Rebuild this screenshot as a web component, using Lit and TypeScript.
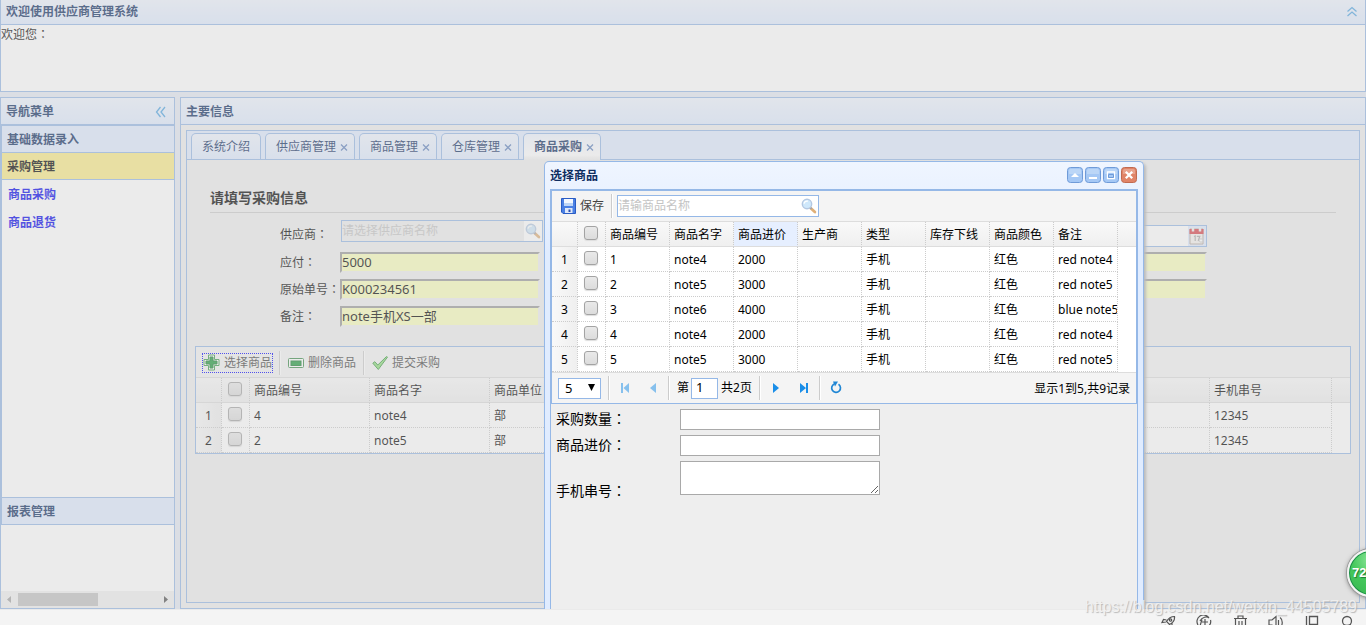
import { LitElement, html, css, svg, nothing } from "lit";
import { customElement } from "lit/decorators.js";
import { classMap } from "lit/directives/class-map.js";

const shared = css`
  * { box-sizing: border-box; }
  button, input, select, textarea {
    font: inherit;
    color: inherit;
    margin: 0;
    padding: 0;
    border: 0;
    background: none;
    border-radius: 0;
    outline: none;
    appearance: none;
  }
  svg { display: block; flex: none; }
  .colon { font-family: "Noto Sans CJK TC", sans-serif; }
  .toolbar {
    display: flex;
    align-items: center;
    height: 31px;
    background: #f4f4f4;
    border-bottom: 1px solid #ddd;
  }
  .sep {
    flex: none;
    width: 2px;
    height: 24px;
    border-left: 1px solid #ccc;
    border-right: 1px solid #fff;
  }
  .tool {
    display: flex;
    align-items: center;
    gap: 4px;
    height: 18px;
    color: #444;
    white-space: nowrap;
  }
  .search {
    display: flex;
    align-items: center;
    width: 202px;
    height: 22px;
    border: 1px solid #95b8e7;
    background: #fff;
  }
  .search input {
    flex: 1;
    min-width: 0;
    height: 20px;
    padding-bottom: 2px;
    font-size: 12px;
  }
  .search input::placeholder { color: #c4c4c4; opacity: 1; }
`;

const colon = html`<span class="colon">：</span>`;

const magnifier = svg`<svg width="18" height="20" viewBox="0 0 18 20" aria-hidden="true">
  <path d="M10.500 12l4.400 4" stroke="#e0b078" stroke-width="2.800" stroke-linecap="round"/>
  <path d="M10 11.400l1.600 1.500" stroke="#9aa4b2" stroke-width="1.600"/>
  <circle cx="7" cy="8" r="4.700" fill="#cfe8fb" stroke="#b4c8e2" stroke-width="1.400"/>
  <path d="M4 7.600c.5-2 2.400-2.800 4-2.400" stroke="#fff" stroke-width="1.300" fill="none"/>
</svg>`;

interface Column { title: string; key: string; width: number; }
type Row = Record<string, string>;

@customElement("data-grid")
class DataGrid extends LitElement {
  static properties = {
    columns: { attribute: false },
    rows: { attribute: false },
    hot: { type: String },
  };
  declare columns: Column[];
  declare rows: Row[];
  declare hot: string;

  static styles = [shared, css`
    :host { display: block; background: #fff; overflow: hidden; }
    table { border-collapse: separate; border-spacing: 0; table-layout: fixed; width: 100%; }
    .num { width: 26px; }
    .tick { width: 28px; }
    th, td {
      height: 25px;
      padding: 2px 4px 0;
      text-align: left;
      font-weight: 400;
      line-height: 16px;
      white-space: nowrap;
      overflow: hidden;
      border-right: 1px dotted #ccc;
      border-bottom: 1px dotted #ccc;
    }
    th { border-bottom: 1px solid #ddd; }
    thead tr { background: linear-gradient(to bottom, #f9f9f9, #efefef); }
    .hot { background: #e6efff; }
    .index { text-align: center; padding: 2px 0 0; background: linear-gradient(to right, #f9f9f9, #efefef); }
    thead .index { background: none; }
    .rest { border-right: 0; }
    td.rest { border-bottom: 0; }
    .box { padding: 0 6px 2px; }
    input {
      display: block;
      width: 14px;
      height: 14px;
      border: 1px solid #a3a3a3;
      border-radius: 3px;
      background: linear-gradient(to bottom, #e9e9e9, #dcdcdc);
      box-shadow: 0 1px 1px #ddd;
    }
  `];

  render() {
    return html`<table>
      <colgroup>
        <col class="num"><col class="tick">
        ${this.columns.map((c) => html`<col style="width:${c.width}px">`)}
        <col>
      </colgroup>
      <thead><tr>
        <th class="index"></th>
        <th class="box"><input type="checkbox" aria-label="全选"></th>
        ${this.columns.map((c) => html`<th class=${classMap({ hot: !!c.title && c.title === this.hot })}>${c.title}</th>`)}
        <th class="rest"></th>
      </tr></thead>
      <tbody>${this.rows.map((r, i) => html`<tr>
        <td class="index">${i + 1}</td>
        <td class="box"><input type="checkbox" aria-label="选择"></td>
        ${this.columns.map((c) => html`<td>${r[c.key] ?? ""}</td>`)}
        <td class="rest"></td>
      </tr>`)}</tbody>
    </table>`;
  }
}

@customElement("product-dialog")
class ProductDialog extends LitElement {
  private columns: Column[] = [
    { title: "商品编号", key: "id", width: 64 },
    { title: "商品名字", key: "name", width: 64 },
    { title: "商品进价", key: "price", width: 64 },
    { title: "生产商", key: "maker", width: 64 },
    { title: "类型", key: "type", width: 64 },
    { title: "库存下线", key: "stock", width: 64 },
    { title: "商品颜色", key: "color", width: 64 },
    { title: "备注", key: "note", width: 64 },
  ];
  private rows: Row[] = [
    { id: "1", name: "note4", price: "2000", type: "手机", color: "红色", note: "red note4" },
    { id: "2", name: "note5", price: "3000", type: "手机", color: "红色", note: "red note5" },
    { id: "3", name: "note6", price: "4000", type: "手机", color: "红色", note: "blue note5" },
    { id: "4", name: "note4", price: "2000", type: "手机", color: "红色", note: "red note4" },
    { id: "5", name: "note5", price: "3000", type: "手机", color: "红色", note: "red note5" },
  ];

  static styles = [shared, css`
    :host {
      display: flex;
      flex-direction: column;
      padding: 0 5px;
      color: #000;
      border: 1px solid #95b8e7;
      border-bottom: 0;
      border-radius: 5px 5px 0 0;
      background: linear-gradient(to bottom, #eff5ff, #e0ecff 20%);
      box-shadow: 2px 2px 3px #bbb;
    }
    .title {
      display: flex;
      align-items: center;
      justify-content: space-between;
      height: 27px;
      font-weight: 700;
      color: #0e2d5f;
    }
    .tools { display: flex; gap: 2px; padding: 0 1px 1px 0; }
    .tools button { width: 16px; height: 16px; }
    .body { flex: 1; border: 1px solid #95b8e7; border-bottom: 0; background: #eee; }
    .panel { border: 1px solid #95b8e7; }
    .toolbar { padding: 0 9px; }
    .toolbar .sep { margin: 0 4px 0 7px; }
    .pager {
      display: flex;
      align-items: center;
      height: 31px;
      padding: 0 6px;
      border-top: 1px solid #ddd;
      background: #f4f4f4;
    }
    .size { position: relative; width: 43px; height: 21px; }
    .size select {
      width: 100%;
      height: 21px;
      padding: 0 6px 2px;
      font-size: 13px;
      line-height: 18px;
      border: 1px solid #95b8e7;
      background: #fff;
    }
    .size svg { position: absolute; right: 6px; top: 6px; pointer-events: none; }
    .pager .sep { margin: 0 7px; }
    .pager button { width: 16px; height: 16px; }
    .pager button + button { margin-left: 12px; }
    .off { opacity: 0.5; }
    .page { display: flex; align-items: center; gap: 2px; padding-right: 3px; }
    .page input {
      width: 27px;
      height: 21px;
      padding: 0 4px 2px;
      font-size: 13px;
      border: 1px solid #95b8e7;
      background: #fff;
    }
    .info { margin-left: auto; padding-top: 2px; white-space: nowrap; }
    .fields {
      display: grid;
      grid-template-columns: 124px 200px;
      grid-template-rows: 21px 21px 39px;
      row-gap: 5px;
      padding: 5px;
      font-size: 14px;
      line-height: 18px;
    }
    .fields input { height: 21px; border: 1px solid #a9a9a9; background: #fff; }
    .fields textarea { width: 200px; height: 34px; border: 1px solid #a9a9a9; background: #fff; resize: both; }
    .low { align-self: end; }
  `];

  render() {
    const frame = (fill: string, line: string) => svg`
      <rect x=".5" y=".5" width="15" height="15" rx="3" fill=${fill} stroke=${line}/>
      <path d="M2 7V3.500Q2 2 3.500 2h9Q14 2 14 3.500V7z" fill="#fff" opacity=".25"/>`;
    return html`
      <div class="title"><span>选择商品</span>
        <div class="tools">
          <button aria-label="折叠"><svg width="16" height="16">${frame("#a5c8f5", "#6f9bd8")}<path d="M4 10h8L8 6z" fill="#fff"/></svg></button>
          <button aria-label="最小化"><svg width="16" height="16">${frame("#a5c8f5", "#6f9bd8")}<path d="M4 10h8v2H4z" fill="#fff"/></svg></button>
          <button aria-label="最大化"><svg width="16" height="16">${frame("#a5c8f5", "#6f9bd8")}<path d="M4.500 5h7v6.500h-7z" fill="#a5c8f5" stroke="#fff" stroke-width="1.300"/><path d="M5.500 7.500h5v3h-5z" fill="#a5c8f5" stroke="#6f9bd8"/></svg></button>
          <button aria-label="关闭"><svg width="16" height="16">${frame("#e08468", "#c06a50")}<path d="M4.800 4.800l6.400 6.400M11.200 4.800l-6.400 6.400" stroke="#fff" stroke-width="2.300"/></svg></button>
        </div>
      </div>
      <div class="body">
        <div class="panel">
          <div class="toolbar">
            <button class="tool">
              <svg width="15" height="16" viewBox="0 0 15 16"><path d="M.5.500h14v15H2L.5 14z" fill="#4a80e4" stroke="#2a5cc4"/><path d="M3 1h9v7H3z" fill="#f3f8ff"/><path d="M3 5h9v3H3z" fill="#bdd5f6"/><path d="M4 10h7.500v5H4z" fill="#dfe8f8"/><path d="M7.500 11.500h2V14h-2z" fill="#2b4fb0"/></svg>
              保存</button>
            <span class="sep"></span>
            <div class="search"><input placeholder="请输商品名称" aria-label="商品名称">${magnifier}</div>
          </div>
          <data-grid .columns=${this.columns} .rows=${this.rows} .hot=${"商品进价"}></data-grid>
          <div class="pager">
            <div class="size">
              <select aria-label="每页条数"><option>5</option><option>10</option></select>
              <svg width="7" height="7"><path d="M0 0h7L3.500 7z" fill="#000"/></svg>
            </div>
            <span class="sep"></span>
            <button class="off" aria-label="首页"><svg width="16" height="16"><path d="M4 3h2v10H4zM12 3v10L6.500 8z" fill="#1a8ee8"/></svg></button>
            <button class="off" aria-label="上一页"><svg width="16" height="16"><path d="M11 3v10L5 8z" fill="#1a8ee8"/></svg></button>
            <span class="sep"></span>
            <label class="page">第<input value="1"></label>
            <span>共2页</span>
            <span class="sep"></span>
            <button aria-label="下一页"><svg width="16" height="16"><path d="M5 3v10l6-5z" fill="#1a8ee8"/></svg></button>
            <button aria-label="末页"><svg width="16" height="16"><path d="M10 3h2v10h-2zM4 3v10l6-5z" fill="#1a8ee8"/></svg></button>
            <span class="sep"></span>
            <button aria-label="刷新"><svg width="16" height="16"><path d="M10.500 4.300A4.400 4.400 0 1 1 6.200 4" fill="none" stroke="#1f86d4" stroke-width="1.700"/><path d="M5 1.500h5L7 6.500z" fill="#1f86d4"/></svg></button>
            <span class="info">显示1到5,共9记录</span>
          </div>
        </div>
        <div class="fields">
          <label for="qty">采购数量${colon}</label><input id="qty">
          <label for="cost">商品进价${colon}</label><input id="cost">
          <label class="low" for="serial">手机串号${colon}</label><textarea id="serial"></textarea>
        </div>
      </div>`;
  }
}

@customElement("app-root")
class AppRoot extends LitElement {
  private tabs = ["系统介绍", "供应商管理", "商品管理", "仓库管理", "商品采购"];
  private columns: Column[] = [
    { title: "商品编号", key: "id", width: 120 },
    { title: "商品名字", key: "name", width: 120 },
    { title: "商品单位", key: "unit", width: 120 },
    { title: "", key: "a", width: 120 },
    { title: "", key: "b", width: 120 },
    { title: "", key: "c", width: 120 },
    { title: "", key: "d", width: 120 },
    { title: "", key: "e", width: 120 },
    { title: "手机串号", key: "serial", width: 122 },
  ];
  private rows: Row[] = [
    { id: "4", name: "note4", unit: "部", serial: "12345" },
    { id: "2", name: "note5", unit: "部", serial: "12345" },
  ];

  static styles = [shared, css`
    :host {
      display: flex;
      flex-direction: column;
      position: relative;
      height: 100vh;
      overflow: hidden;
      font-family: "Noto Sans", "Noto Sans CJK SC", sans-serif;
      font-size: 12px;
      line-height: 16px;
      color: #000;
      background: #f4f4f4;
    }
    .app {
      position: relative;
      flex: 1;
      min-height: 0;
      display: flex;
      flex-direction: column;
      gap: 5px;
      background: #e5eaf3;
      overflow: hidden;
    }
    .head {
      display: flex;
      align-items: center;
      justify-content: space-between;
      flex: none;
      height: 27px;
      padding: 2px 5px 0;
      font-weight: 700;
      color: #0e2d5f;
      background: linear-gradient(to bottom, #eff5ff, #e0ecff);
      border-bottom: 1px solid #95b8e7;
    }
    .north { height: 92px; border: 1px solid #95b8e7; border-top: 0; background: #fff; }
    .north .head { height: 25px; padding: 0 7px 0 5px; }
    .hello { display: block; padding-top: 1px; }
    .middle { flex: 1; min-height: 0; display: flex; gap: 5px; }
    .west {
      flex: none;
      width: 175px;
      display: flex;
      flex-direction: column;
      border: 1px solid #95b8e7;
      background: #fff;
    }
    .west .head { padding-right: 8px; }
    .accordion {
      flex: 1;
      min-height: 0;
      display: flex;
      flex-direction: column;
      border: 1px solid #95b8e7;
      border-width: 1px 0 0 1px;
    }
    .fold {
      flex: none;
      height: 27px;
      padding: 2px 5px 0;
      text-align: left;
      font-weight: 700;
      color: #0e2d5f;
      background: #e0ecff;
      border-bottom: 1px solid #95b8e7;
    }
    .fold.open { color: #000; background: #fbec88; }
    .links { flex: 1; display: flex; flex-direction: column; gap: 12px; padding: 7px 6px; font-weight: 700; }
    .links a { color: #0000ee; text-decoration: none; }
    .last { border-top: 1px solid #95b8e7; height: 28px; }
    .blank { flex: none; height: 66px; }
    .scroll { flex: none; display: flex; align-items: center; height: 17px; background: #f1f1f1; }
    .scroll .thumb { width: 80px; height: 13px; background: #c1c1c1; }
    .scroll svg:last-child { margin-left: auto; }
    .center {
      flex: 1;
      min-width: 0;
      display: flex;
      flex-direction: column;
      border: 1px solid #95b8e7;
      background: #eee;
    }
    .tabs {
      flex: 1;
      display: flex;
      flex-direction: column;
      margin: 5px;
      border: 1px solid #95b8e7;
    }
    .strip {
      flex: none;
      display: flex;
      align-items: flex-end;
      gap: 4px;
      height: 29px;
      padding: 0 4px;
      background: #e0ecff;
      border-bottom: 1px solid #95b8e7;
    }
    .tab {
      display: flex;
      align-items: center;
      gap: 4px;
      height: 26px;
      padding: 0 10px;
      color: #0e2d5f;
      background: linear-gradient(to bottom, #eff5ff, #e0ecff);
      border: 1px solid #95b8e7;
      border-bottom: 0;
      border-radius: 5px 5px 0 0;
    }
    .tab.closable { padding-right: 6px; }
    .tab.on { height: 27px; margin-bottom: -1px; font-weight: 700; background: linear-gradient(to bottom, #eff5ff, #fff 80%, #eee); }
    .sheet { flex: 1; padding: 28px 8px 0; }
    .sheet h2 {
      margin: 0 15px 7px;
      padding-bottom: 4px;
      font-size: 14px;
      font-weight: 700;
      line-height: 20px;
      border-bottom: 1px solid #ccc;
    }
    form { display: flex; justify-content: space-between; margin: 0 144px 16px 85px; }
    .fields { display: grid; grid-template-columns: 60px 202px; grid-template-rows: 29px 27px 27px 27px; align-items: center; }
    .fields.right { grid-template-columns: 202px; }
    .fields label { white-space: nowrap; }
    .fields .search { align-self: start; margin-left: 1px; background: #eee; }
    .fields .date { align-self: end; margin: 0 0 2px; background: #fff; }
    .right .fill { justify-self: end; }
    .search .btn { background: #fff; }
    .fill {
      height: 21px;
      width: 200px;
      padding-bottom: 2px;
      font-size: 13px;
      background: #faffbd;
      border: 2px solid;
      border-color: #9a9a9a #eee #eee #9a9a9a;
    }
    .list { border: 1px solid #95b8e7; }
    .list .toolbar { padding: 1px 7px 0; }
    .list .sep { margin: 0 7px; }
    .focus { outline: 1px dotted #0000ff; }
    .mask { position: absolute; inset: 0; background: #ccc; opacity: 0.4; }
    product-dialog { position: absolute; left: 544px; top: 161px; bottom: 0; width: 600px; }
    .bar {
      flex: none;
      display: flex;
      justify-content: flex-end;
      gap: 20px;
      height: 16px;
      padding: 5px 10px 0 0;
      border-top: 1px solid #eaeaea;
      background: #f4f4f4;
      overflow: hidden;
    }
    .bar button { width: 16px; height: 16px; }
    .mark {
      position: absolute;
      right: 9px;
      bottom: 8px;
      font: 16px/20px "Liberation Sans", sans-serif;
      color: #f2f2f2;
      text-shadow: 1px 1px 1px #aaa;
      opacity: 0.8;
    }
    .ball {
      position: absolute;
      right: -29px;
      bottom: 28px;
      width: 48px;
      height: 48px;
      padding-left: 3px;
      text-align: left;
      border: 2px solid #f4f4f4;
      border-radius: 50%;
      font: 700 13px/20px "Liberation Sans", sans-serif;
      color: #fff;
      text-shadow: 1px 1px 1px #1b7c34;
      background: radial-gradient(circle at 50% 20%, #8ee69a, #45c85c 45%, #38b650);
      box-shadow: 0 0 0 1px #999, 0 1px 5px #777, inset 0 0 0 1px #1d8c4a;
    }
  `];

  private tab(name: string) {
    const closable = name !== "系统介绍";
    return html`<button class=${classMap({ tab: true, closable, on: name === "商品采购" })}>
      <span>${name}</span>
      ${closable ? html`<svg width="8" height="8"><path d="M1 1.500l6 6M7 1.500l-6 6" stroke="#5f82bd" stroke-width="1.300"/></svg>` : nothing}
    </button>`;
  }

  render() {
    return html`
      <div class="app">
        <header class="north">
          <div class="head"><span>欢迎使用供应商管理系统</span>
            <svg width="12" height="12"><path d="M1.500 5.500L6 1.500l4.500 4M1.500 10L6 6l4.500 4" fill="none" stroke="#4fa5e3" stroke-width="1.300"/></svg>
          </div>
          <span class="hello">欢迎您${colon}</span>
        </header>
        <div class="middle">
          <nav class="west">
            <div class="head"><span>导航菜单</span>
              <svg width="11" height="12"><path d="M5.500 1L1.500 6l4 5M10 1L6 6l4 5" fill="none" stroke="#4fa5e3" stroke-width="1.300"/></svg>
            </div>
            <div class="accordion">
              <button class="fold">基础数据录入</button>
              <button class="fold open">采购管理</button>
              <div class="links"><a href="#purchase">商品采购</a><a href="#return">商品退货</a></div>
              <button class="fold last">报表管理</button>
            </div>
            <div class="blank"></div>
            <div class="scroll">
              <svg width="17" height="17"><path d="M10 5v7L6 8.500z" fill="#a3a3a3"/></svg>
              <div class="thumb"></div>
              <svg width="17" height="17"><path d="M7 5v7l4-3.500z" fill="#505050"/></svg>
            </div>
          </nav>
          <main class="center">
            <div class="head"><span>主要信息</span></div>
            <div class="tabs">
              <div class="strip">${this.tabs.map((t) => this.tab(t))}</div>
              <div class="sheet">
                <h2>请填写采购信息</h2>
                <form>
                  <div class="fields">
                    <label for="supplier">供应商${colon}</label>
                    <div class="search"><input id="supplier" placeholder="请选择供应商名称"><span class="btn">${magnifier}</span></div>
                    <label for="due">应付${colon}</label><input class="fill" id="due" value="5000">
                    <label for="order">原始单号${colon}</label><input class="fill" id="order" value="K000234561">
                    <label for="memo">备注${colon}</label><input class="fill" id="memo" value="note手机XS一部">
                  </div>
                  <div class="fields right">
                    <div class="search date"><input aria-label="日期">
                      <svg width="18" height="20"><rect width="18" height="20" fill="#e0ecff"/><path d="M2 3h13v15H2z" fill="#f6f2ee" stroke="#b5a8a0"/><path d="M1.500 3h14v5h-14z" fill="#d9434a"/><path d="M5 1.500v4M12 1.500v4" stroke="#eee" stroke-width="2.500"/><path d="M6 10.500l1.200-.5v5M8.800 10.300h3l-1.600 4.700" fill="none" stroke="#aaa" stroke-width="1.200"/><circle cx="13" cy="14.500" r="1.700" fill="#fff" stroke="#ccc"/></svg>
                    </div>
                    <input class="fill" aria-label="实付"><input class="fill" aria-label="经办人">
                  </div>
                </form>
                <section class="list">
                  <div class="toolbar">
                    <button class="tool focus"><svg width="17" height="17"><path d="M5.500 1h6v4.500H16v6h-4.500V16h-6v-4.500H1v-6h4.500z" fill="#fff" stroke="#3b9d4a"/><path d="M7 3h3v4h4v3h-4v4H7v-4H3V7h4z" fill="#1f9a3c" stroke="#1b7f33"/></svg>选择商品</button>
                    <span class="sep"></span>
                    <button class="tool"><svg width="16" height="16"><rect x=".5" y="3.500" width="15" height="9" rx="1" fill="#fff" stroke="#3b8a4a"/><rect x="3" y="6" width="10" height="4.500" fill="#1f9a3c" stroke="#1b7f33"/></svg>删除商品</button>
                    <span class="sep"></span>
                    <button class="tool"><svg width="16" height="16"><path d="M.8 8.200l2-1.500 3 3.300L14.500 1.500l1 .6L6.300 14.500z" fill="#8ede7c" stroke="#3f9b44"/></svg>提交采购</button>
                  </div>
                  <data-grid .columns=${this.columns} .rows=${this.rows}></data-grid>
                </section>
              </div>
            </div>
          </main>
        </div>
        <div class="mask"></div>
        <product-dialog></product-dialog>
      </div>
      <footer class="bar">
        <button aria-label="加速"><svg width="16" height="16" fill="none" stroke="#555" stroke-width="1.200"><path d="M14.500 1.500c-4 0-6 1.500-8 5l3 3c4-2 5.500-4 5-8zM6.500 5L3.500 4.500 2 7.500l4-.5M9 10l-.5 3.500L12 11.500V8"/><circle cx="10.500" cy="5" r="1.200"/><path d="M2.500 13l3-3"/></svg></button>
        <button aria-label="浏览"><svg width="16" height="16" fill="none" stroke="#555" stroke-width="1.200"><path d="M2 10A6 6 0 0 1 13 3M4 6c2-4 7-5 9-3M14.500 5A6 6 0 0 1 8 12.500"/><path d="M6 7h6M9 4v7M6 4.500L4 11"/></svg></button>
        <button aria-label="清理"><svg width="16" height="16" fill="none" stroke="#555" stroke-width="1.200"><path d="M2 3.500h13M6 3V1h5v2M3.500 4v10h10V4M7 6v6M10 6v6"/></svg></button>
        <button aria-label="声音"><svg width="16" height="16" fill="none" stroke="#555" stroke-width="1.200"><path d="M1 5h3l4-3.500v12L4 10H1zM10.500 5v5M12 2.500c3 2 3 8 0 10"/></svg></button>
        <button aria-label="窗口"><svg width="16" height="16" fill="none" stroke="#555" stroke-width="1.300"><path d="M5.500 1.500h8v8h-8zM2.500 1v11.500H12"/></svg></button>
        <button aria-label="缩放"><svg width="16" height="16" fill="none" stroke="#555" stroke-width="1.300"><circle cx="7" cy="6" r="4.500"/><path d="M10 9.500l3 3.500"/></svg></button>
      </footer>
      <button class="ball">72</button>
      <span class="mark">https://blog.csdn.net/weixin_44505789</span>
    `;
  }
}
